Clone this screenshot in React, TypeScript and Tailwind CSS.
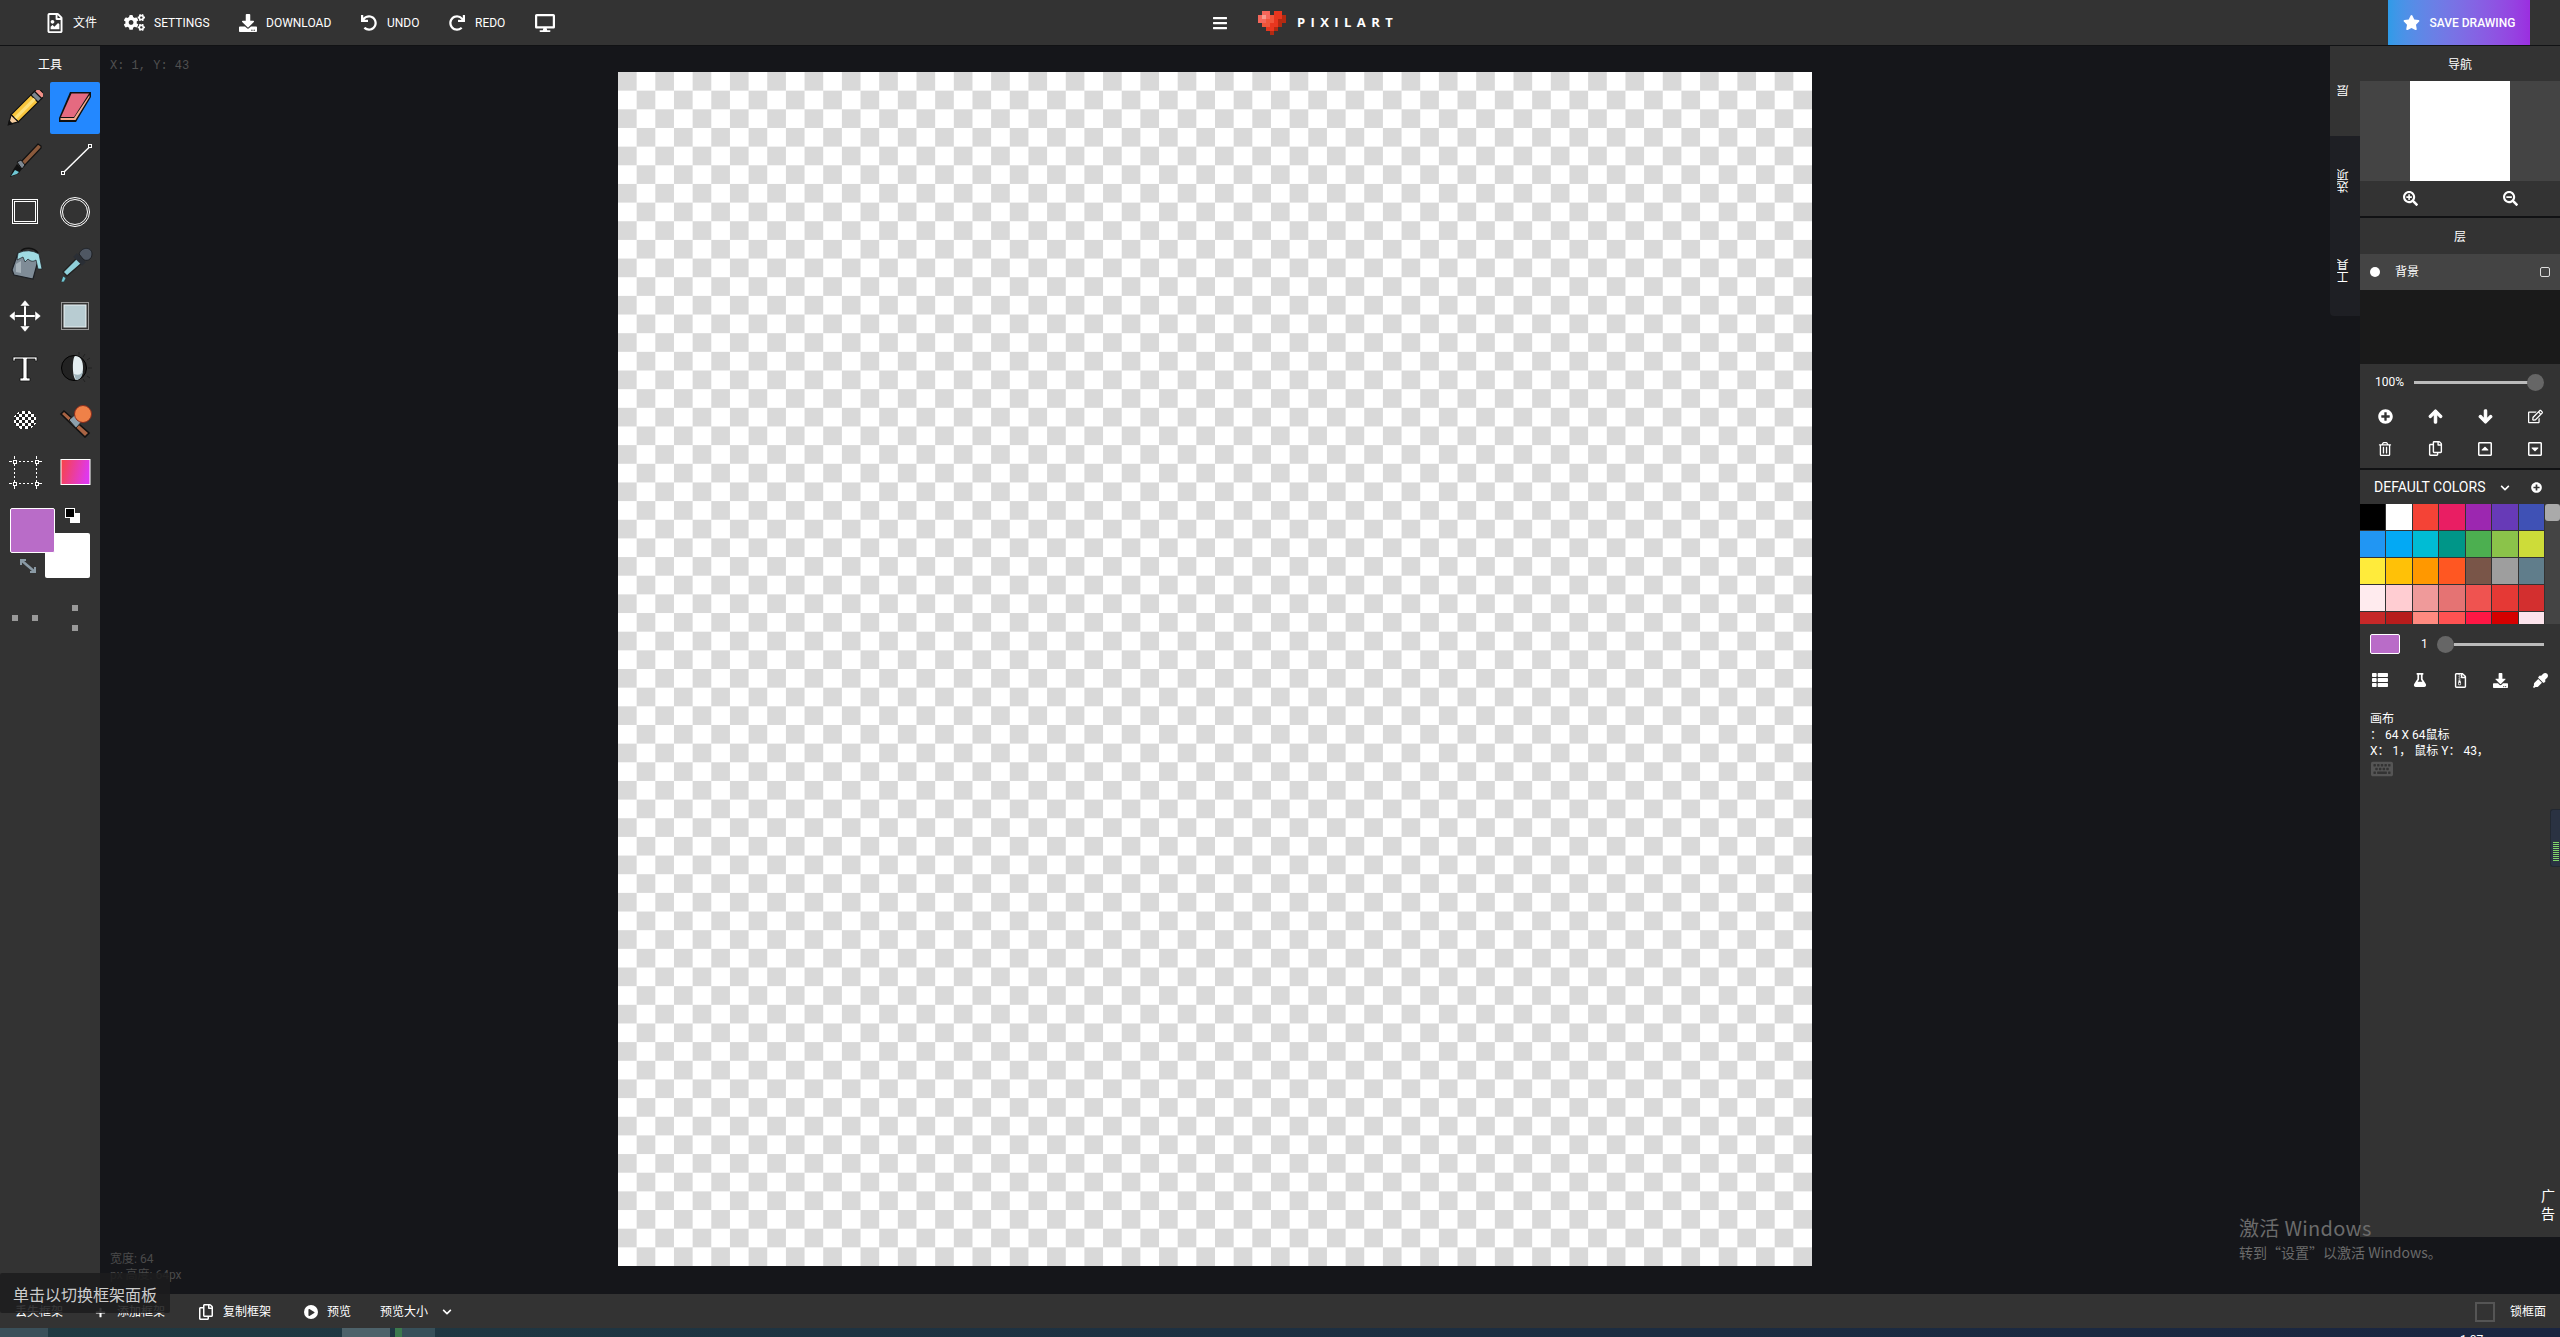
import React from 'react';
import {
  FaRegFileImage, FaCogs, FaDownload, FaUndo, FaRedo, FaDesktop, FaBars, FaStar, FaSearchPlus, FaSearchMinus,
  FaPlusCircle, FaArrowUp, FaArrowDown, FaRegEdit, FaRegTrashAlt, FaRegCopy, FaRegCaretSquareUp, FaRegCaretSquareDown,
  FaChevronDown, FaFlask, FaRegFileArchive, FaEyeDropper, FaKeyboard, FaPlay, FaPlus, FaThList,
} from 'react-icons/fa';

const colors = [
  '#000000', '#ffffff', '#f44336', '#e91e63', '#9c27b0', '#673ab7', '#3f51b5',
  '#2196f3', '#03a9f4', '#00bcd4', '#009688', '#4caf50', '#8bc34a', '#cddc39',
  '#ffeb3b', '#ffc107', '#ff9800', '#ff5722', '#795548', '#9e9e9e', '#607d8b',
  '#ffebee', '#ffcdd2', '#ef9a9a', '#e57373', '#ef5350', '#e53935', '#d32f2f',
  '#c62828', '#b71c1c', '#ff8a80', '#ff5252', '#ff1744', '#d50000', '#fce4ec',
];

const heart = ['.aa.cc.', 'alabccd', 'aabbcdd', '.bbccd.', '..ccd..', '...d...'];
const heartColor: Record<string, string> = { a: '#f4665a', l: '#f79a8c', b: '#f0553a', c: '#e8361e', d: '#b32a12' };

function Heart() {
  return (
    <svg width="28" height="24" viewBox="0 0 28 24" shapeRendering="crispEdges">
      {heart.flatMap((row, y) =>
        row.split('').map((c, x) =>
          c === '.' ? null : <rect key={`${x}-${y}`} x={x * 4} y={y * 4} width="4" height="4" fill={heartColor[c]} />,
        ),
      )}
    </svg>
  );
}

const S = ({ children }: { children: React.ReactNode }) => (
  <svg width="36" height="36" viewBox="0 0 36 36">{children}</svg>
);

const tools: React.ReactNode[] = [
  <S key="pencil">
    <g transform="translate(18 18) scale(1.27) rotate(45) translate(-18 -15.5)" stroke="#111" strokeWidth=".9">
      <path d="M14 -3 h8 v4 h-8z" fill="#f08f86" />
      <path d="M14 1 h8 v4 h-8z" fill="#7d8790" />
      <path d="M14 5 h8 v22 h-8z" fill="#f8c53c" />
      <path d="M17 5 h2.5 v22 h-2.5z" fill="#fde07a" stroke="none" />
      <path d="M14 27 h8 l-4 7z" fill="#f8cfa0" />
      <path d="M16.5 31.5 h3 l-1.5 2.5z" fill="#111" />
    </g>
  </S>,
  <S key="eraser">
    <path d="M13 2 H34 L34 7 L19 32 H2 V28z" fill="#111" />
    <path d="M14.5 3.5 H32 L17 27 H4z" fill="#e56a80" />
    <path d="M32.5 5 V7 L18.5 30 H3.5 V28 H17z" fill="#f5a98c" />
  </S>,
  <S key="brush">
    <path d="M31 2 L34 4 L34 6 L17 24 L13 21z" fill="#8b5a3c" stroke="#111" strokeWidth="1.2" />
    <path d="M10 20 L14 18 L18 23 L15 27z" fill="#7d8790" stroke="#111" />
    <path d="M10 22 L15 27 L11 32 L3 35 L6 28z" fill="#111" />
    <path d="M4 34 L8 28 L12 30 L10 32z" fill="#6fc7d4" />
  </S>,
  <S key="line">
    <path d="M5.5 31.5 L33 4.5" stroke="#fff" strokeWidth="1.5" />
    <rect x="4.5" y="29.5" width="3" height="3" fill="#333" stroke="#fff" />
    <rect x="31.5" y="2.5" width="3" height="3" fill="#333" stroke="#fff" />
  </S>,
  <S key="rect">
    <rect x="5.5" y="5.5" width="25" height="24" fill="none" stroke="#fff" />
    <rect x="7.5" y="7.5" width="21" height="20" fill="none" stroke="#fff" />
  </S>,
  <S key="circle">
    <circle cx="18" cy="18" r="14.5" fill="none" stroke="#fff" />
    <circle cx="18" cy="18" r="12.5" fill="none" stroke="#fff" />
  </S>,
  <S key="bucket">
    <path d="M14 5 C17 1 27 1 31 7" fill="none" stroke="#111" strokeWidth="1.4" />
    <path d="M11 7 L32 11 L26 33 L7 29 L5 24z" fill="#7f8c97" stroke="#1c1f24" strokeWidth="1.2" />
    <path d="M9 18 L14 15 L14 27 L9 26z" fill="#a7b3bb" />
    <path d="M11 7 Q22 2 32 8 L35 23 L31 23 L29 14 Q25 17 21 13 L18 16 L16 11 L10 14z" fill="#9fdbe3" stroke="#1c1f24" strokeWidth=".7" />
  </S>,
  <S key="dropper">
    <path d="M20 12 L25 17 L10 30 L6 26z" fill="#8fd0da" stroke="#222" strokeWidth="1.4" />
    <path d="M18 9 L27 18" stroke="#2a2e35" strokeWidth="5" />
    <path d="M22 8 C25 0 35 1 35 8 C35 14 29 16 26 13z" fill="#4f5763" stroke="#1c1f24" />
    <path d="M6 30 L9 32 L7 36 L4 36z" fill="#6fc7d4" stroke="#222" strokeWidth=".6" />
  </S>,
  <S key="move">
    <path d="M18 5 V31 M5 18 H31" stroke="#fff" strokeWidth="2" />
    <path d="M18 2 l5 6 h-10z M18 34 l5 -6 h-10z M2 18 l6 -5 v10z M34 18 l-6 -5 v10z" fill="#fff" stroke="#111" strokeWidth=".4" />
  </S>,
  <S key="select">
    <rect x="4.5" y="4.5" width="27" height="27" fill="none" stroke="#fff" strokeWidth="1" strokeDasharray="1 1" />
    <rect x="7" y="7" width="22" height="22" fill="#b8ccd2" stroke="#e8f0f2" strokeWidth="1" />
  </S>,
  <S key="text">
    <path d="M6 7 H30 V11 H28 V9 H20 V28 H23 V31 H13 V28 H16 V9 H8 V11 H6z" fill="#fff" stroke="#111" strokeWidth=".8" />
  </S>,
  <S key="lighten">
    <circle cx="17" cy="18" r="12.5" fill="#222" stroke="#000" />
    <path d="M18 6 C24 6 26 11 26 18 C26 25 23 30 19 30 C15 28 15 8 18 6z" fill="#e3edf0" />
    <path d="M17 24 C22 26 25 24 26 20 C26 26 23 30 19 30z" fill="#9fb3bb" />
    <path d="M28 4 l-2 3 M33 8 l-3 2 M35 18 h-4 M33 28 l-3 -2 M28 32 l-2 -3 M22 2 v3" stroke="#222" strokeWidth="1" />
  </S>,
  <svg key="dither" width="36" height="36" viewBox="0 0 36 36" shapeRendering="crispEdges">
    <defs>
      <pattern id="dith" width="6" height="6" patternUnits="userSpaceOnUse">
        <rect width="6" height="6" fill="#222" />
        <rect width="3" height="3" fill="#fff" />
        <rect x="3" y="3" width="3" height="3" fill="#fff" />
      </pattern>
    </defs>
    <ellipse cx="18" cy="18" rx="11.5" ry="9.5" fill="url(#dith)" />
  </svg>,
  <S key="stamp">
    <path d="M4 12 L7 9 L32 31 L28 35z" fill="#a96444" stroke="#111" strokeWidth="1.6" />
    <path d="M12 18 L22 9 L28 16 L19 26z" fill="#8ca0ad" stroke="#222" />
    <circle cx="26" cy="12" r="8.5" fill="#ef8148" stroke="#8a2c1c" />
  </S>,
  <svg key="marquee" width="36" height="36" viewBox="0 0 36 36" shapeRendering="crispEdges">
    <rect x="7.5" y="7.5" width="22" height="22" fill="none" stroke="#fff" strokeDasharray="2 2" />
    <rect x="6" y="6" width="3" height="3" fill="#333" stroke="#fff" />
    <rect x="28" y="6" width="3" height="3" fill="#333" stroke="#fff" />
    <rect x="6" y="28" width="3" height="3" fill="#333" stroke="#fff" />
    <rect x="28" y="28" width="3" height="3" fill="#333" stroke="#fff" />
    <path d="M2 7.5 h3 M32 7.5 h3 M2 29.5 h3 M32 29.5 h3 M7.5 2 v3 M29.5 2 v3 M7.5 32 v3 M29.5 32 v3" stroke="#fff" />
  </svg>,
  <svg key="gradient" width="36" height="36" viewBox="0 0 36 36">
    <defs>
      <linearGradient id="gr" x1="0" y1="0" x2="1" y2="0.2">
        <stop offset="0" stopColor="#f84444" />
        <stop offset="1" stopColor="#df38ee" />
      </linearGradient>
    </defs>
    <rect x="4" y="5.5" width="29" height="25" fill="url(#gr)" stroke="#fff" />
  </svg>,
];

function Tab({ label, active }: { label: string; active?: boolean }) {
  return (
    <div className={`h-[90px] flex items-center justify-center pr-[2px] ${active ? 'bg-[#333333]' : ''}`}>
      <span className="[writing-mode:vertical-rl] rotate-180 text-[12px] leading-none text-white">{label}</span>
    </div>
  );
}

function TopItem({ icon, label, className }: { icon: React.ReactNode; label?: string; className: string }) {
  return (
    <div className={`flex items-center text-[12px] text-white ${className}`}>
      {icon}
      {label ? <span className="ml-[9px] whitespace-nowrap">{label}</span> : null}
    </div>
  );
}

export default function App() {
  return (
    <div className="relative flex flex-col h-screen w-full overflow-hidden bg-[#15161a] text-white [font-family:Roboto,'Noto_Sans_CJK_SC',sans-serif]">
      {/* top bar */}
      <header className="relative flex h-[46px] shrink-0 items-center border-b border-[#111214] bg-[#333333] pl-[45px]">
        <TopItem icon={<FaRegFileImage size={20} />} label="文件" className="w-[79px] [&>span]:ml-[8px]" />
        <TopItem icon={<FaCogs size={21} />} label="SETTINGS" className="w-[115px]" />
        <TopItem icon={<FaDownload size={18} />} label="DOWNLOAD" className="w-[122px]" />
        <TopItem icon={<FaUndo size={16} />} label="UNDO" className="w-[88px] [&>span]:ml-[10px]" />
        <TopItem icon={<FaRedo size={16} />} label="REDO" className="w-[86px] [&>span]:ml-[10px]" />
        <FaDesktop size={20} className="text-white" />
        <div className="flex-1" />
        <div className="mr-[30px] flex h-[45px] w-[142px] items-center justify-center gap-[10px] bg-gradient-to-r from-[#2e9be8] to-[#9b2ee0] text-[12px] font-medium">
          <FaStar size={17} />
          <span>SAVE DRAWING</span>
        </div>
        <div className="absolute left-[1212px] top-0 flex h-[45px] items-center">
          <FaBars size={16} />
          <div className="ml-[30px]"><Heart /></div>
          <span className="ml-[11px] text-[13px] font-bold tracking-[5.4px] [font-family:'Open_Sans',sans-serif]">PIXILART</span>
        </div>
      </header>

      {/* main */}
      <div className="flex min-h-0 flex-1">
        {/* left tools */}
        <aside className="flex w-[100px] shrink-0 flex-col bg-[#333333]">
          <div className="flex h-[36px] items-center justify-center pt-[2px] text-[12px]">工具</div>
          <div className="grid grid-cols-[50px_50px] auto-rows-[52px]">
            {tools.map((t, i) => (
              <div key={i} className={`flex items-center justify-center rounded-[2px] ${i === 1 ? 'bg-[#2388ff]' : ''}`}>
                {t}
              </div>
            ))}
          </div>
          <div className="relative mt-[10px] h-[72px] w-[100px]">
            <div className="absolute left-[45px] top-[25px] h-[45px] w-[45px] rounded-[2px] bg-white" />
            <div className="absolute left-[10px] top-0 h-[45px] w-[45px] rounded-[2px] border border-white bg-[#b96cc8]" />
            <div className="absolute left-[70px] top-[5px] h-[10px] w-[10px] bg-white" />
            <div className="absolute left-[65px] top-0 h-[10px] w-[10px] border border-white bg-black" />
            <svg className="absolute left-[19px] top-[50px]" width="18" height="16" viewBox="0 0 18 16">
              <path d="M2 2 L16 14" stroke="#8a9aa5" strokeWidth="2.5" />
              <path d="M1 1 h6 v2 h-4 v4 h-2z M17 15 h-6 v-2 h4 v-4 h2z" fill="#8a9aa5" />
            </svg>
          </div>
          <div className="mt-[25px] flex h-[26px] w-[100px]">
            <div className="flex w-[50px] items-center gap-[14px] pl-[12px]">
              <div className="h-[6px] w-[6px] bg-[#999999]" />
              <div className="h-[6px] w-[6px] bg-[#999999]" />
            </div>
            <div className="flex w-[50px] flex-col items-center justify-between">
              <div className="h-[6px] w-[6px] bg-[#999999]" />
              <div className="h-[6px] w-[6px] bg-[#999999]" />
            </div>
          </div>
        </aside>

        {/* center */}
        <main className="relative flex min-w-0 flex-1 justify-center pt-[26px]">
          <div className="h-[1194px] w-[1194px] bg-[conic-gradient(#ffffff_25%,#d9d9d9_0_50%,#ffffff_0_75%,#d9d9d9_0)] bg-[length:37.3125px_37.3125px]" />
          <div className="absolute left-[10px] top-[11px] text-[12px] text-[#505050] [font-family:'Liberation_Mono',monospace]">X: 1, Y: 43</div>
          <div className="absolute left-[10px] top-[1205px] text-[12px] leading-[16px] text-[#4a4a4a]">
            <div>宽度: 64</div>
            <div>px 高度: 64px</div>
          </div>
        </main>

        {/* right */}
        <div className="flex w-[230px] shrink-0 items-start">
          <div className="w-[30px] shrink-0 overflow-hidden rounded-bl-[4px] bg-[#1e1f24]">
            <Tab label="层" active />
            <Tab label="选项" />
            <Tab label="工具" />
          </div>
          <aside className="flex h-[1191px] w-[200px] shrink-0 flex-col bg-[#333333] text-[12px]">
            <div className="flex h-[35px] items-center justify-center pt-[2px]">导航</div>
            <div className="flex h-[100px] justify-center bg-[#444444]"><div className="h-[100px] w-[100px] bg-white" /></div>
            <div className="flex h-[35px] items-center">
              <div className="flex w-[100px] justify-center"><FaSearchPlus size={15} /></div>
              <div className="flex w-[100px] justify-center"><FaSearchMinus size={15} /></div>
            </div>
            <div className="h-[2px] bg-[#111214]" />
            <div className="flex h-[36px] items-center justify-center pt-[2px]">层</div>
            <div className="flex h-[36px] items-center bg-[#444444] px-[10px]">
              <div className="h-[10px] w-[10px] rounded-full bg-white" />
              <span className="ml-[15px]">背景</span>
              <div className="ml-auto h-[10px] w-[10px] rounded-[2px] border border-[#dddddd]" />
            </div>
            <div className="h-[74px] bg-[#1a1a1a]" />
            <div className="flex h-[36px] items-center pl-[15px]">
              <span className="w-[39px]">100%</span>
              <div className="relative h-[3px] w-[116px] bg-[#bbbbbb]">
                <div className="absolute right-[-14px] top-[-7px] h-[17px] w-[17px] rounded-full bg-[#666666]" />
              </div>
            </div>
            <div className="grid h-[68px] grid-cols-4 grid-rows-2 items-center justify-items-center pb-[3px]">
              <FaPlusCircle size={15} /><FaArrowUp size={15} stroke="currentColor" strokeWidth={40} /><FaArrowDown size={15} stroke="currentColor" strokeWidth={40} /><FaRegEdit size={15} />
              <FaRegTrashAlt size={14} /><FaRegCopy size={15} /><FaRegCaretSquareUp size={16} /><FaRegCaretSquareDown size={16} />
            </div>
            <div className="h-[2px] bg-[#111214]" />
            <div className="flex h-[34px] items-center pl-[14px] pt-[1px]">
              <span className="w-[122px] whitespace-nowrap text-[14px]">DEFAULT COLORS</span>
              <FaChevronDown size={10} className="ml-[4px]" />
              <FaPlusCircle size={11} className="ml-[21px]" />
            </div>
            <div className="flex h-[120px] overflow-hidden">
              <div className="grid h-[135px] w-[185px] grid-cols-7 auto-rows-[27px]">
                {colors.map((c) => (
                  <div key={c} className="mb-px mr-px" style={{ backgroundColor: c }} />
                ))}
              </div>
              <div className="h-[120px] w-[15px] bg-[#444444]">
                <div className="h-[17px] rounded-[3px] bg-[#aaaaaa]" />
              </div>
            </div>
            <div className="flex h-[40px] items-center pl-[10px]">
              <div className="h-[20px] w-[30px] rounded-[2px] border border-white bg-[#b96cc8]" />
              <span className="ml-[21px]">1</span>
              <div className="relative ml-[26px] h-[3px] w-[90px] bg-[#bbbbbb]">
                <div className="absolute left-[-17px] top-[-7px] h-[17px] w-[17px] rounded-full bg-[#666666]" />
              </div>
            </div>
            <div className="grid h-[32px] grid-cols-5 items-center justify-items-center">
              <FaThList size={16} /><FaFlask size={14} /><FaRegFileArchive size={15} /><FaDownload size={15} /><FaEyeDropper size={15} />
            </div>
            <div className="mt-[15px] pl-[10px] leading-[16px]">
              <div>画布</div>
              <div>：&nbsp;64 X 64鼠标</div>
              <div>X：&nbsp;1，&nbsp;鼠标 Y：&nbsp;43，</div>
              <FaKeyboard size={22} className="-mt-[1px] ml-[1px] text-[#555555]" />
            </div>
            <div className="flex flex-1 flex-col items-end justify-between">
              <div className="mt-[29px] h-[58px] w-[10px] rounded-l-[3px] border border-r-0 border-[#222831] bg-[#2a3242] pl-[2px] pt-[32px]">
                <div className="h-[20px] w-[6px] bg-[repeating-linear-gradient(180deg,#7fd46a_0_1px,#2a3242_1px_2px)]" />
              </div>
              <div className="mb-[14px] mr-[5px] w-[14px] text-center text-[14px] leading-[18px]">广告</div>
            </div>
          </aside>
        </div>
      </div>

      {/* bottom bar */}
      <footer className="flex h-[34px] shrink-0 items-center bg-[#333333] pl-[15px] pr-[14px] pt-[2px] text-[12px]">
        <span className="w-[80px]">丢失框架</span>
        <FaPlus size={11} />
        <span className="ml-[11px] w-[81px]">添加框架</span>
        <FaRegCopy size={16} />
        <span className="ml-[9px] w-[81px]">复制框架</span>
        <span className="flex h-[14px] w-[14px] items-center justify-center rounded-full bg-white"><FaPlay size={7} className="text-[#333333]" /></span>
        <span className="ml-[9px] w-[53px]">预览</span>
        <span>预览大小</span>
        <FaChevronDown size={10} className="ml-[14px]" />
        <div className="ml-auto h-[20px] w-[20px] border-2 border-[#555555]" />
        <span className="ml-[15px]">锁框面</span>
      </footer>
      <div className="relative flex h-[9px] shrink-0 overflow-hidden bg-gradient-to-r from-[#203a42] to-[#1a2540]">
        <div className="h-full w-[48px] bg-[#3a505a]" />
        <div className="ml-[294px] h-full w-[48px] bg-[#4d626a]" />
        <div className="ml-[5px] h-full w-[7px] bg-[#3c7a4e]" />
        <div className="h-full w-[33px] bg-[#37505a]" />
        <span className="absolute left-[2460px] top-[5px] text-[12px] leading-[14px]">1:07</span>
      </div>

      {/* overlays */}
      <div className="absolute bottom-[24px] left-0 flex h-[40px] w-[170px] items-center rounded-[2px] bg-[rgba(28,28,30,0.88)] pl-[13px] pt-[6px] text-[16px] text-[#cccccc]">
        单击以切换框架面板
      </div>
      <div className="pointer-events-none absolute left-[2239px] top-[1214px] text-[#6b6b6b] [font-family:'Noto_Sans_CJK_SC',sans-serif]">
        <div className="text-[20px] leading-[28px] tracking-[0.3px]">激活 Windows</div>
        <div className="text-[14px] leading-[20px]">转到“设置”以激活 Windows。</div>
      </div>
    </div>
  );
}
